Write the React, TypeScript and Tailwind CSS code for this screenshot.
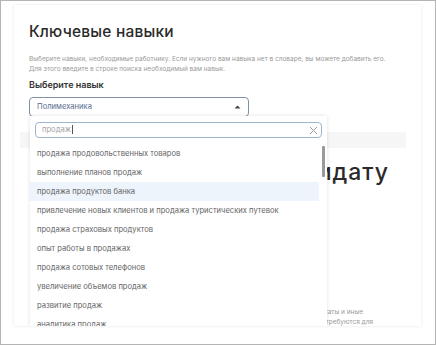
import React from "react";

const items = [
  "продажа продовольственных товаров",
  "выполнение планов продаж",
  "продажа продуктов банка",
  "привлечение новых клиентов и продажа туристических путевок",
  "продажа страховых продуктов",
  "опыт работы в продажах",
  "продажа сотовых телефонов",
  "увеличение объемов продаж",
  "развитие продаж",
  "аналитика продаж",
];

export default function App() {
  return (
    <div
      className="w-[436px] h-[345px] border border-[#b4b4b4] bg-white overflow-hidden"
      style={{ fontFamily: "Inter, 'Noto Sans', sans-serif" }}
    >
      <div className="ml-[13px] mt-[4px] w-[407px] h-[321px] relative overflow-hidden bg-white shadow-[0_0_3px_rgba(0,0,0,0.10)] pl-[15px] pt-[15px]">
        <div className="text-[15.5px] leading-[24px] font-medium text-[#2a2a2a] tracking-[0.2px]">Ключевые навыки</div>
        <div className="mt-[10px] text-[6.5px] leading-[10px] text-[#9a9a9a]">
          <div>Выберите навыки, необходимые работнику. Если нужного вам навыка нет в словаре, вы можете добавить его.</div>
          <div>Для этого введите в строке поиска необходимый вам навык.</div>
        </div>
        <div className="mt-[5px] text-[9px] leading-[12px] font-semibold text-[#333]">Выберите навык</div>
        <div className="mt-[6px] w-[220px] h-[20px] border border-[#7f8fa6] rounded-[4px] flex items-center justify-between pl-[7px] pr-[7px]">
          <span className="text-[7.6px] text-[#5a6c8c]">Полимеханика</span>
          <svg width="7" height="4" viewBox="0 0 7 4">
            <path d="M0.5 3.5 L3.5 0.5 L6.5 3.5 Z" fill="#444" />
          </svg>
        </div>
        {/* background content */}
        <div className="mt-[15px] -ml-[9px] w-[386px] h-[16px] bg-[#f6f6f6]" />
        <div className="mt-[10px] w-[360px] text-right text-[23px] leading-[28px] font-medium tracking-[1px] text-[#2a2a2a]">
          Требования к кандидату
        </div>
        <div className="mt-[121px] text-[6.5px] leading-[10px] text-[#9a9a9a]">
          <div className="w-[334px] text-right">навыки, сертификаты и иные</div>
          <div className="w-[344px] text-right">документы, которые требуются для</div>
        </div>

        {/* dropdown overlay */}
        <div className="absolute left-[16px] top-[111px] w-[297px] h-[240px] bg-white shadow-[0_0_4px_rgba(0,0,0,0.12)]">
          <div className="ml-[5px] mt-[6px] w-[287px] h-[16px] border border-[#9db6cc] rounded-[4px] flex items-center justify-between pl-[6px] pr-[3px]">
            <span className="text-[7.6px] text-[#a3a3a3] flex items-center">
              продаж<span className="inline-block w-[1px] h-[9px] bg-[#555] ml-[1px]" />
            </span>
            <svg width="9" height="9" viewBox="0 0 9 9">
              <path d="M1 1 L8 8 M8 1 L1 8" stroke="#9a9a9a" strokeWidth="1" />
            </svg>
          </div>
          <div className="mt-[6px] flex">
            <div className="w-[289px]">
              {items.map((t, i) => (
                <div
                  key={i}
                  className={
                    "h-[19px] flex items-center pl-[7px] text-[7.6px] text-[#666] " +
                    (i === 2 ? "bg-[#edf4fb]" : "")
                  }
                >
                  {t}
                </div>
              ))}
            </div>
            <div className="ml-[3px] mt-[2px] w-[3px] h-[31px] bg-[#9a9a9a] rounded-[1px]" />
          </div>
        </div>
      </div>
    </div>
  );
}
